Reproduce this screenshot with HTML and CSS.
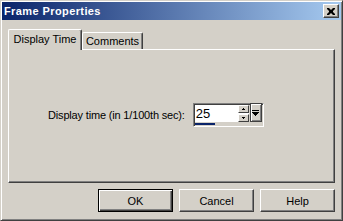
FILE: index.html
```html
<!DOCTYPE html>
<html>
<head>
<meta charset="utf-8">
<link rel="stylesheet" href="styles.css">
</head>
<body>
<div class="window">
  <div class="titlebar">
    <span class="title">Frame Properties</span>
    <button class="close" aria-label="Close">
      <svg width="8" height="7" viewBox="0 0 8 7"><path d="M0 0h2l2 2 2-2h2v1L6 3v1l2 2v1H6L4 5 2 7H0V6l2-2V3L0 1z" fill="#000"/></svg>
    </button>
  </div>
  <div class="body">
    <div class="tabs">
      <div class="tab active">Display Time</div>
      <div class="tab">Comments</div>
    </div>
    <div class="panel">
      <div class="row">
        <span class="label">Display time (in 1/100th sec):</span>
        <div class="spin">
          <div class="spin-top">
            <div class="field">25</div>
            <div class="arrows">
              <div class="arrow up"><svg width="3" height="2" viewBox="0 0 3 2"><path d="M1 0h1v1h1v1H0V1h1z" fill="#000"/></svg></div>
              <div class="arrow down"><svg width="3" height="2" viewBox="0 0 3 2"><path d="M0 0h3v1H2v1H1V1H0z" fill="#000"/></svg></div>
            </div>
            <div class="drop"><svg width="7" height="6" viewBox="0 0 7 6"><path d="M0 0h7v1H0z M0 2h7v1H6v1H5v1H4v1H3V5H2V4H1V3H0z" fill="#000"/></svg></div>
          </div>
          <div class="spin-bottom"><div class="bar"></div></div>
        </div>
      </div>
    </div>
    <div class="buttons">
      <button class="btn default">OK</button>
      <button class="btn">Cancel</button>
      <button class="btn">Help</button>
    </div>
  </div>
</div>
</body>
</html>
```

FILE: styles.css
```css
* { box-sizing: border-box; }
html, body { margin: 0; padding: 0; }
body {
  width: 343px;
  height: 221px;
  overflow: hidden;
  background: #d4d0c8;
  font-family: "Liberation Sans", Arial, sans-serif;
  font-size: 11px;
  color: #000;
}
.window {
  width: 343px;
  height: 221px;
  background: #d4d0c8;
  border: 1px solid;
  border-color: #d4d0c8 #404040 #404040 #d4d0c8;
  box-shadow: inset 1px 1px 0 #ffffff, inset -1px -1px 0 #808080;
  padding: 1px;
  display: flex;
  flex-direction: column;
}
.titlebar {
  height: 18px;
  background: linear-gradient(to right, #0a246a, #a6caf0);
  display: flex;
  align-items: center;
  justify-content: space-between;
  padding: 0 2px 0 2px;
}
.title {
  color: #fff;
  font-weight: bold;
  font-size: 11px;
  letter-spacing: 0.4px;
}
.close {
  width: 16px;
  height: 14px;
  padding: 0;
  margin: 0;
  background: #d4d0c8;
  border: 1px solid;
  border-color: #fff #404040 #404040 #fff;
  box-shadow: inset -1px -1px 0 #808080;
  display: flex;
  align-items: center;
  justify-content: center;
}
.close svg { display: block; margin-left: -1px; }
.body {
  flex: 1;
  padding: 9px 6px 0 6px;
  display: flex;
  flex-direction: column;
}
.tabs {
  display: flex;
  align-items: flex-end;
  height: 20px;
}
.tab {
  height: 17px;
  padding: 0;
  border-top: 1px solid #fff;
  border-left: 1px solid #fff;
  border-right: 1px solid #404040;
  border-radius: 2px 2px 0 0;
  box-shadow: inset -1px 0 0 #808080;
  background: #d4d0c8;
  display: flex;
  align-items: center;
  justify-content: center;
  width: 61px;
  white-space: nowrap;
}
.tab.active {
  width: 74px;
  height: 21px;
  margin-bottom: -1px;
  position: relative;
  z-index: 1;
  padding-bottom: 2px;
}
.panel {
  height: 134px;
  border: 1px solid;
  border-color: #fff #404040 #404040 #fff;
  box-shadow: inset -1px -1px 0 #808080;
  padding: 53px 0 0 39px;
}
.row {
  display: flex;
  align-items: center;
  gap: 8px;
}
.label { white-space: nowrap; letter-spacing: -0.17px; }
.spin {
  width: 71px;
  height: 24px;
  border: 1px solid;
  border-color: #808080 #fff #fff #808080;
  box-shadow: inset 1px 1px 0 #404040, inset -1px -1px 0 #d4d0c8;
  padding: 1px;
  display: flex;
  flex-direction: column;
}
.spin-top {
  display: flex;
  height: 17px;
}
.field {
  flex: 1;
  background: #fff;
  font-size: 13px;
  line-height: 17px;
  padding-left: 1px;
}
.arrows {
  width: 11px;
  display: flex;
  flex-direction: column;
  background: #fff;
}
.arrow {
  height: 8px;
  background: #d4d0c8;
  border: 1px solid;
  border-color: #fff #404040 #404040 #fff;
  display: flex;
  align-items: center;
  justify-content: center;
}
.arrow + .arrow { margin-top: 1px; }
.arrow svg { display: block; }
.drop {
  width: 12px;
  margin-left: 1px;
  height: 19px;
  margin-top: -2px;
  background: #d4d0c8;
  border: 1px solid #404040;
  box-shadow: inset 1px 1px 0 #fff, inset -1px -1px 0 #808080;
  display: flex;
  align-items: center;
  justify-content: center;
}
.drop svg { display: block; }
.spin-bottom {
  height: 3px;
  padding-top: 1px;
}
.bar {
  width: 20px;
  height: 2px;
  background: #0a246a;
}
.buttons {
  display: flex;
  justify-content: flex-end;
  gap: 6px;
  margin-top: 6px;
}
.btn {
  width: 75px;
  height: 23px;
  padding: 0;
  margin: 0;
  font-family: "Liberation Sans", Arial, sans-serif;
  font-size: 11px;
  color: #000;
  background: #d4d0c8;
  border: 1px solid;
  border-color: #fff #404040 #404040 #fff;
  box-shadow: inset -1px -1px 0 #808080;
}
.btn.default {
  border: 1px solid #000;
  box-shadow: inset 1px 1px 0 #fff, inset -1px -1px 0 #404040, inset -2px -2px 0 #808080;
}
```
